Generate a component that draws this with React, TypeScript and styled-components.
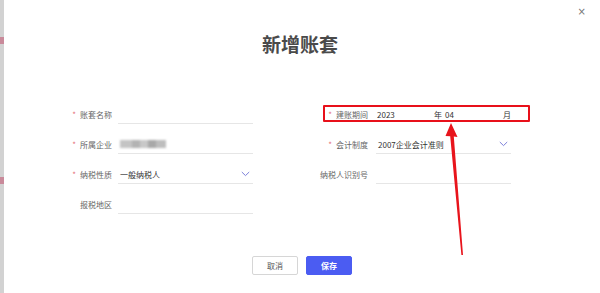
import React from 'react';
import styled, { createGlobalStyle } from 'styled-components';

const GlobalStyle = createGlobalStyle`
  html, body {
    margin: 0;
    padding: 0;
    background: #fff;
  }
  body {
    font-family: "Noto Sans CJK SC", "Noto Sans", "Liberation Sans", sans-serif;
  }
`;

const Page = styled.div`
  position: relative;
  display: flex;
  width: 600px;
  height: 293px;
  overflow: hidden;
  background: #fff;
`;

// strip of the page behind the dialog
const Backdrop = styled.div`
  flex: 0 0 4px;
  background:
    linear-gradient(
      to bottom,
      #d2d2d2 0 37px,
      #c98a9a 37px 44px,
      #d2d2d2 44px 177px,
      #c98a9a 177px 184px,
      #d2d2d2 184px
    );
`;

const Dialog = styled.div`
  flex: 1;
  display: flex;
  flex-direction: column;
  align-items: stretch;
`;

const CloseButton = styled.span`
  position: absolute;
  top: 7px;
  right: 14px;
  font-size: 10px;
  line-height: 1;
  color: #777;
  font-family: "DejaVu Sans", sans-serif;
`;

const Title = styled.h1`
  margin: 32px 0 0;
  text-align: center;
  font-size: 19px;
  line-height: 24px;
  font-weight: 700;
  color: #4a4a4a;
  padding-right: 4px;
`;

const Form = styled.div`
  display: grid;
  grid-template-columns: 183px 193px;
  column-gap: 65px;
  row-gap: 11px;
  margin: 49px 0 0 66px;
`;

const Field = styled.div<{ labelWidth: number; marked?: boolean }>`
  position: relative;
  display: flex;
  align-items: flex-start;
  height: 19px;

  &::after {
    content: '';
    display: ${({ marked }) => (marked ? 'block' : 'none')};
    position: absolute;
    left: 5px;
    right: -19px;
    top: 0px;
    bottom: 2px;
    border: 2px solid #e8101a;
    border-radius: 1px;
  }

  & > label {
    width: ${({ labelWidth }) => `${labelWidth}px`};
  }
`;

const Label = styled.label<{ gap: number }>`
  flex: 0 0 auto;
  display: flex;
  justify-content: flex-end;
  align-items: center;
  height: 18px;
  margin-right: ${({ gap }) => `${gap}px`};
  font-size: 8px;
  color: #666;
  white-space: nowrap;
`;

const Required = styled.span`
  color: #e5707a;
  margin-right: 4px;
  font-size: 8px;
`;

const Control = styled.div<{ plain?: boolean }>`
  flex: 0 0 135px;
  display: flex;
  align-items: center;
  height: 18px;
  border-bottom: ${({ plain }) => (plain ? '1px solid transparent' : '1px solid #e6e6e6')};
  font-size: 8px;
  color: #333;
  box-sizing: content-box;
`;

const Value = styled.span`
  flex: 1;
  padding-left: 2px;
  white-space: nowrap;
`;

const Blurred = styled.div`
  width: 46px;
  height: 8px;
  margin-left: 2px;
  background: linear-gradient(
    to right,
    #c4c4c4 0 12px,
    #b3b3b3 12px 20px,
    #c8c8c8 20px 28px,
    #a8a8a8 28px 36px,
    #bdbdbd 36px
  );
  filter: blur(1px);
`;

const Chevron = styled.svg`
  width: 9px;
  height: 6px;
  margin-right: 3px;
  flex: 0 0 auto;
`;

const PeriodPart = styled.span<{ width: number }>`
  width: ${({ width }) => `${width}px`};
  padding-left: 1px;
  white-space: nowrap;
`;

const Footer = styled.div`
  display: flex;
  justify-content: center;
  gap: 8px;
  margin-top: 42px;
`;

const Button = styled.button<{ primary?: boolean }>`
  width: 46px;
  height: 19px;
  padding: 0;
  border-radius: 2px;
  border: 1px solid ${({ primary }) => (primary ? '#4b5cf2' : '#d6d6d6')};
  background: ${({ primary }) => (primary ? '#4b5cf2' : '#fff')};
  color: ${({ primary }) => (primary ? '#fff' : '#555')};
  font-family: "Noto Sans CJK SC", sans-serif;
  font-size: 8px;
  line-height: 17px;
  font-weight: ${({ primary }) => (primary ? 700 : 400)};
  cursor: pointer;
`;

const Annotation = styled.svg`
  position: absolute;
  left: 0;
  top: 0;
  width: 600px;
  height: 293px;
  pointer-events: none;
`;

const DownArrow = () => (
  <Chevron viewBox="0 0 9 6">
    <path d="M0.8 1 L4.5 4.6 L8.2 1" fill="none" stroke="#7b7fd9" strokeWidth="1" />
  </Chevron>
);

export default function App() {
  return (
    <>
      <GlobalStyle />
      <Page>
        <Backdrop />
        <Dialog>
          <CloseButton>×</CloseButton>
          <Title>新增账套</Title>
          <Form>
            <Field labelWidth={42}>
              <Label gap={6}>
                <Required>*</Required>账套名称
              </Label>
              <Control>
                <Value />
              </Control>
            </Field>
            <Field labelWidth={50} marked>
              <Label gap={8}>
                <Required>*</Required>建账期间
              </Label>
              <Control plain>
                <PeriodPart width={56}>2023</PeriodPart>
                <PeriodPart width={10}>年</PeriodPart>
                <PeriodPart width={57}>04</PeriodPart>
                <PeriodPart width={10}>月</PeriodPart>
              </Control>
            </Field>

            <Field labelWidth={42}>
              <Label gap={6}>
                <Required>*</Required>所属企业
              </Label>
              <Control>
                <Blurred />
              </Control>
            </Field>
            <Field labelWidth={50}>
              <Label gap={8}>
                <Required>*</Required>会计制度
              </Label>
              <Control>
                <Value>2007企业会计准则</Value>
                <DownArrow />
              </Control>
            </Field>

            <Field labelWidth={42}>
              <Label gap={6}>
                <Required>*</Required>纳税性质
              </Label>
              <Control>
                <Value>一般纳税人</Value>
                <DownArrow />
              </Control>
            </Field>
            <Field labelWidth={50}>
              <Label gap={8}>纳税人识别号</Label>
              <Control>
                <Value />
              </Control>
            </Field>

            <Field labelWidth={42}>
              <Label gap={6}>报税地区</Label>
              <Control>
                <Value />
              </Control>
            </Field>
          </Form>
          <Footer>
            <Button>取消</Button>
            <Button primary>保存</Button>
          </Footer>
        </Dialog>
        <Annotation viewBox="0 0 600 293">
          <path
            d="M451 123 L457.5 137 L453.8 136.5 L463 255 L461.4 255 L450.2 136.3 L445.5 136 Z"
            fill="#e8141c"
          />
        </Annotation>
      </Page>
    </>
  );
}
